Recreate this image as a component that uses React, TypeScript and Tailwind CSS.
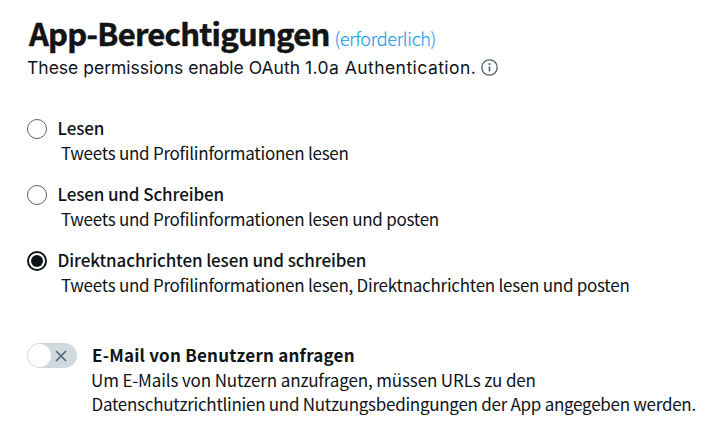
import React from "react";

const sans = "font-['Noto_Sans_CJK_SC','Noto_Sans',sans-serif]";

function InfoIcon() {
  return (
    <svg className="h-[17px] w-[17px] shrink-0" viewBox="0 0 17 17" fill="none">
      <circle cx="8.5" cy="8.5" r="7.7" stroke="#536471" strokeWidth="1.3" />
      <path d="M8.5 7.4v5.1" stroke="#536471" strokeWidth="1.6" />
      <circle cx="8.5" cy="5" r="1.1" fill="#536471" />
    </svg>
  );
}

type OptionProps = {
  title: string;
  description: string;
  selected?: boolean;
};

function Option({ title, description, selected }: OptionProps) {
  return (
    <div role="radio" aria-checked={!!selected} className="flex h-[66px] items-start gap-[10px]">
      {selected ? (
        <span className="mt-[10px] flex size-5 shrink-0 items-center justify-center rounded-full border-2 border-[#0f1419]">
          <span className="size-3 rounded-full bg-[#0f1419]" />
        </span>
      ) : (
        <span className="mt-[10px] size-5 shrink-0 rounded-full border border-[#536471]" />
      )}
      <div className="whitespace-nowrap pt-[6px] text-[17px] leading-[25px] text-[#0f1419]">
        <div className="pl-[0.5px] font-medium tracking-[-0.11px]">{title}</div>
        <div className="pl-1 tracking-[-0.26px]">{description}</div>
      </div>
    </div>
  );
}

export default function App() {
  return (
    <main className={"h-[446px] w-[707px] overflow-hidden bg-white pl-[27px] pt-3 text-[#0f1419] " + sans}>
      <header>
        <h1 className="flex h-[43px] items-baseline gap-[5px] whitespace-nowrap">
          <span className="pl-[2px] text-[31px] font-bold leading-[42px] tracking-[-0.76px] text-[#141414] [-webkit-text-stroke:0.5px_#141414]">App-Berechtigungen</span>
          <span className="text-[18px] font-light leading-[24px] tracking-[-0.3px] text-[#1d9bf0] [-webkit-text-stroke:0.15px_#1d9bf0]">(erforderlich)</span>
        </h1>
        <div className="flex h-[25px] items-center gap-[5px] whitespace-nowrap">
          <p className="w-[449px] font-[Inter,sans-serif] text-[17.5px] leading-6">
            These permissions enable OAuth <span className="tracking-[0.45px]">1.0a Authentication.</span>
          </p>
          <InfoIcon />
        </div>
      </header>

      <div role="radiogroup" className="pt-[29px]">
        <Option title="Lesen" description="Tweets und Profilinformationen lesen" />
        <Option title="Lesen und Schreiben" description="Tweets und Profilinformationen lesen und posten" />
        <Option title="Direktnachrichten lesen und schreiben" description="Tweets und Profilinformationen lesen, Direktnachrichten lesen und posten" selected />
      </div>

      <section className="flex items-start gap-[15px] pt-9">
        <button type="button" role="switch" aria-checked="false" className="flex h-[25px] w-[50px] shrink-0 items-center justify-between rounded-full bg-[#cfd9de] pl-px pr-[10px]">
          <span className="size-[23px] rounded-full bg-white" />
          <svg className="size-3" viewBox="0 0 12 12" stroke="#536471" strokeWidth="1.6">
            <path d="M1 1l10 10M11 1L1 11" />
          </svg>
        </button>
        <div className="whitespace-nowrap text-[17px] leading-6">
          <div className="pb-px font-bold tracking-[0.22px]">E-Mail von Benutzern anfragen</div>
          <div className="-ml-px tracking-[-0.13px]">Um E-Mails von Nutzern anzufragen, müssen URLs zu den</div>
          <div className="-ml-[0.5px] tracking-[-0.27px]">Datenschutzrichtlinien und Nutzungsbedingungen der App angegeben werden.</div>
        </div>
      </section>
    </main>
  );
}
